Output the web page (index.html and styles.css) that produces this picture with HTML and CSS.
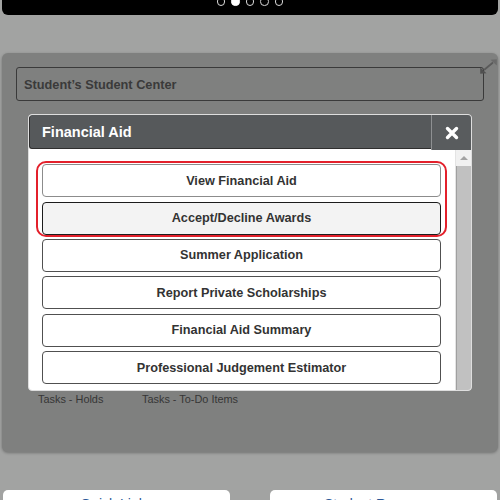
FILE: index.html
```html
<!DOCTYPE html>
<html lang="en">
<head>
<meta charset="utf-8">
<title>Student's Student Center</title>
<link rel="stylesheet" href="styles.css">
</head>
<body>
  <header class="topbar">
    <div class="dots">
      <span class="dot"></span>
      <span class="dot on"></span>
      <span class="dot"></span>
      <span class="dot"></span>
      <span class="dot"></span>
    </div>
  </header>

  <section class="panel">
    <svg class="expand" width="17" height="15" viewBox="0 0 17 15" aria-hidden="true">
      <line x1="4" y1="11" x2="13" y2="3.5" stroke="#5a5a5a" stroke-width="1.8"/>
      <polygon points="16.8,0.2 16.8,6.5 10.5,0.8" fill="#6a6a6a"/>
      <polygon points="0.2,14.8 0.2,8.5 6.5,14.2" fill="#505050"/>
    </svg>
    <div class="center-box">Student’s Student Center</div>
    <div class="tasks">
      <span class="task">Tasks - Holds</span>
      <span class="task">Tasks - To-Do Items</span>
    </div>

    <div class="modal">
      <div class="modal-head">
        <div class="modal-title">Financial Aid</div>
        <div class="modal-close">
          <svg width="14" height="14" viewBox="0 0 14 14" aria-hidden="true">
            <path d="M2.5 2.5 L11.5 11.5 M11.5 2.5 L2.5 11.5" stroke="#fff" stroke-width="3.4" stroke-linecap="round"/>
          </svg>
        </div>
      </div>
      <div class="modal-body">
        <div class="links">
          <div class="group">
            <div class="btn first">View Financial Aid</div>
            <div class="btn hover">Accept/Decline Awards</div>
          </div>
          <div class="btn">Summer Application</div>
          <div class="btn">Report Private Scholarships</div>
          <div class="btn">Financial Aid Summary</div>
          <div class="btn">Professional Judgement Estimator</div>
        </div>
        <div class="scrollbar">
          <div class="scroll-up"><span class="tri"></span></div>
          <div class="thumb"></div>
        </div>
      </div>
    </div>
  </section>

  <div class="cards">
    <div class="card">Quick Links</div>
    <div class="card">Student Resources</div>
  </div>
</body>
</html>
```

FILE: styles.css
```css
html, body {
  margin: 0;
  padding: 0;
}

body {
  width: 500px;
  height: 500px;
  overflow: hidden;
  background: #a2a3a2;
  font-family: "Liberation Sans", Arial, sans-serif;
}

.topbar {
  height: 15px;
  margin: 0 2px;
  background: #000;
  border-radius: 0 0 6px 6px;
  display: flex;
  justify-content: center;
  align-items: flex-start;
  overflow: hidden;
}

.dots {
  display: flex;
  gap: 6px;
  margin-top: -3px;
}

.dot {
  width: 8.5px;
  height: 8.5px;
  box-sizing: border-box;
  border: 1px solid #d8d8d8;
  border-radius: 50%;
}

.dot.on {
  background: #fff;
  border-color: #fff;
}

.panel {
  position: relative;
  margin: 38px 2px 0;
  height: 399px;
  box-sizing: border-box;
  padding: 14px 14px 0;
  background: #7f807f;
  border-radius: 6px;
  box-shadow: 0 1px 3px rgba(0, 0, 0, 0.3);
}

.expand {
  position: absolute;
  top: 6px;
  right: 1px;
}

.center-box {
  height: 34px;
  box-sizing: border-box;
  border: 1px solid #3a3a3a;
  border-radius: 3px;
  padding-left: 7px;
  display: flex;
  align-items: center;
  font-size: 12.75px;
  font-weight: bold;
  color: #3a3a3a;
}

.tasks {
  margin-top: 292px;
  padding-left: 22px;
  display: flex;
}

.task {
  width: 104px;
  font-size: 10.9px;
  line-height: 12px;
  color: #363636;
}

.modal {
  position: absolute;
  left: 26px;
  top: 61px;
  width: 444px;
  height: 277px;
  box-sizing: border-box;
  border: 1px solid #dedede;
  border-radius: 4px;
  background: #fff;
  overflow: hidden;
  display: flex;
  flex-direction: column;
}

.modal-head {
  display: flex;
  align-items: flex-start;
  height: 35px;
  flex: none;
  background: #fff;
}

.modal-title {
  flex: 1;
  height: 34px;
  box-sizing: border-box;
  background: #56595b;
  border: 1px solid #2f2f2f;
  border-right: none;
  border-top-color: #56595b;
  border-radius: 3px 0 0 3px;
  padding-left: 12px;
  display: flex;
  align-items: center;
  color: #fff;
  font-size: 14.5px;
  font-weight: bold;
}

.modal-close {
  width: 40px;
  height: 35px;
  box-sizing: border-box;
  background: #595c5e;
  border-left: 1px solid #8e9092;
  display: flex;
  align-items: center;
  justify-content: center;
}

.modal-body {
  flex: 1;
  min-height: 0;
  display: flex;
}

.links {
  flex: 1;
  padding: 11px 14px 0 13px;
  display: flex;
  flex-direction: column;
  gap: 4.5px;
  overflow: hidden;
}

.group {
  margin: 0 -6px -2.5px -6px;
  padding: 1px 4px 0 4px;
  border: 2px solid #e3202b;
  border-radius: 10px;
  display: flex;
  flex-direction: column;
  gap: 4.5px;
}

.btn {
  flex: none;
  height: 33px;
  box-sizing: border-box;
  border: 1px solid #505050;
  border-radius: 4px;
  background: #fff;
  display: flex;
  align-items: center;
  justify-content: center;
  font-size: 12.7px;
  font-weight: bold;
  color: #333;
}

.btn.first {
  border-color: #8c8c8c;
}

.btn.hover {
  background: #f3f3f3;
  border-color: #1c1c1c;
}

.scrollbar {
  flex: none;
  width: 16px;
  box-sizing: border-box;
  display: flex;
  flex-direction: column;
  border-left: 1px solid #e4e4e4;
}

.scroll-up {
  height: 16px;
  background: #f1f1f1;
  display: flex;
  align-items: center;
  justify-content: center;
}

.tri {
  width: 0;
  height: 0;
  border-left: 4px solid transparent;
  border-right: 4px solid transparent;
  border-bottom: 4px solid #a3a3a3;
}

.thumb {
  flex: 1;
  background: #c1c1c1;
  border-left: 1px solid #a0a0a0;
}

.cards {
  margin-top: 38px;
  padding: 0 3px;
  display: flex;
  gap: 40px;
}

.card {
  flex: 1;
  height: 60px;
  background: #fff;
  border-radius: 5px;
  padding-top: 6px;
  box-sizing: border-box;
  text-align: center;
  font-size: 14px;
  color: #2b5797;
}
```
